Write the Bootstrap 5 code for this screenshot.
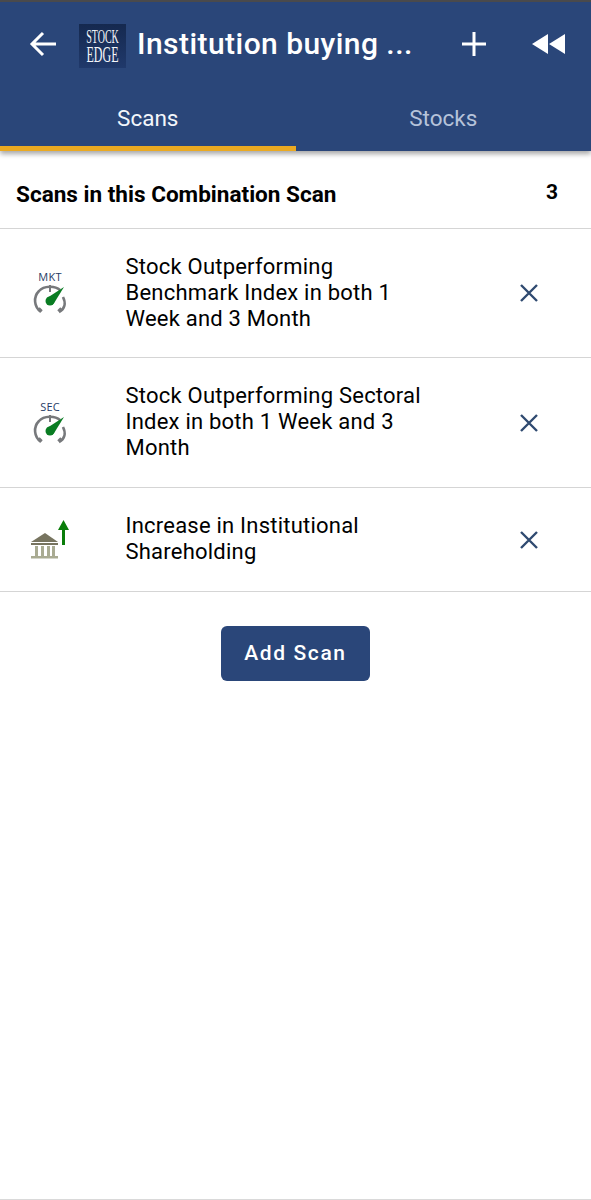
<!DOCTYPE html>
<html lang="en"><head><meta charset="utf-8"><title>Scans</title>
<link href="https://cdn.jsdelivr.net/npm/bootstrap@5.3.0/dist/css/bootstrap.min.css" rel="stylesheet">
<style>
html,body{height:100%}
body{font-family:Roboto,"Liberation Sans",sans-serif;color:#000;background:#fff;overflow:hidden}
.app-head{background:#2a4679;border-top:2px solid #4a4a4c;box-shadow:0 3px 5px rgba(0,0,0,.35);height:151px}
.tool-row{height:84px;padding-left:29px}
.logo-box{width:47px;height:44px;background:linear-gradient(#15294f,#20396b);color:#f4f6fa;font-family:"Liberation Serif",serif;line-height:1;margin-left:22px;margin-top:3px;flex:none}
.logo-a{font-size:10px;transform:scaleY(1.8);line-height:7px;margin-top:9.5px;white-space:nowrap}
.logo-b{font-size:12px;transform:scaleY(1.85);line-height:8px;margin-top:10.5px;white-space:nowrap}
.app-title{font-size:30px;font-weight:500;color:#fff;margin-left:11px;width:300px;letter-spacing:.45px;white-space:nowrap;line-height:36px;flex:none}
.tool-gap-a{margin-left:24px}
.tool-gap-b{margin-left:45px}
.tab-row{height:65px}
.tab-item{flex:1 1 50%;font-size:22.5px;text-align:center;padding-top:16px;color:#b6c3da;border-bottom:5px solid transparent}
.tab-on{color:#f3f6fb;border-bottom-color:#eaa921}
.sum-row{height:78px;padding:0 33px 0 16px;border-bottom:1px solid #d5d5d5;font-size:22.55px;font-weight:700}
.sum-title{margin-top:11px;display:block}
.sum-num{margin-top:7px;font-size:21px}
.scan-row{border-bottom:1px solid #d5d5d5;font-size:22px;line-height:26px;letter-spacing:.22px}
.row-a{height:129px}
.row-b{height:130px}
.row-c{height:104px}
.icon-cell{width:125.5px;flex:none;padding-left:28px}
.text-cell{width:320px;flex:none;padding-bottom:1px}
.close-cell{margin-left:73.5px}
.add-btn,.add-btn:hover{background:#2a4679;color:#fff;border:0;border-radius:6px;width:149px;height:55px;font-size:21px;font-weight:500;letter-spacing:1.6px;padding:0}
.btn-wrap{margin-top:34px}
.bottom-line{position:fixed;left:0;right:0;bottom:0;height:1px;background:#d9d9d9}
svg{display:block}
</style></head>
<body>
<header class="app-head d-flex flex-column">
  <div class="tool-row d-flex align-items-center">
    <svg width="28" height="28" viewBox="0 0 28 28" fill="none" stroke="#fff" stroke-width="3"><path d="M3 14H27M14 3L3 14L14 25"/></svg>
    <div class="logo-box text-center overflow-hidden"><div class="logo-a">STOCK</div><div class="logo-b">EDGE</div></div>
    <div class="app-title">Institution buying ...</div>
    <svg class="tool-gap-a" width="26" height="26" viewBox="0 0 26 26" fill="none" stroke="#fff" stroke-width="3"><path d="M13 1V25M1 13H25"/></svg>
    <svg class="tool-gap-b" width="34" height="22" viewBox="0 0 34 22" fill="#fff"><path d="M0 11L16 1V21ZM17 11L33 1V21Z"/></svg>
  </div>
  <div class="tab-row d-flex">
    <div class="tab-item tab-on">Scans</div>
    <div class="tab-item">Stocks</div>
  </div>
</header>
<main>
  <div class="sum-row d-flex justify-content-between align-items-center"><span class="sum-title">Scans in this Combination Scan</span><span class="sum-num">3</span></div>
  <div class="scan-row row-a d-flex align-items-center">
    <div class="icon-cell"><svg width="46" height="46" viewBox="0 0 46 46"><text x="22" y="11" text-anchor="middle" font-family="'Open Sans',sans-serif" font-size="11" fill="#1f3b66">MKT</text><g fill="none" stroke="#77797c" stroke-width="2.600"><path d="M13 42C6 37 5 27 11 21C16 15.500 27 15.500 32 20M35 27C38 33 37 39 31 42"/><path d="M22 15V22" stroke-width="2"/><path d="M11 38L14 41M33 38L30 41" stroke-width="2"/></g><circle cx="22" cy="31" r="4.500" fill="#0a7d23"/><path d="M19 28L36 17L25.500 34Z" fill="#0a7d23"/></svg></div>
    <div class="text-cell">Stock Outperforming Benchmark Index in both 1 Week and 3 Month</div>
    <div class="close-cell"><svg width="20" height="20" viewBox="0 0 20 20" fill="none" stroke="#2f4a70" stroke-width="2.400"><path d="M2 2L18 18M18 2L2 18"/></svg></div>
  </div>
  <div class="scan-row row-b d-flex align-items-center">
    <div class="icon-cell"><svg width="46" height="46" viewBox="0 0 46 46"><text x="22" y="11" text-anchor="middle" font-family="'Open Sans',sans-serif" font-size="11" fill="#1f3b66">SEC</text><g fill="none" stroke="#77797c" stroke-width="2.600"><path d="M13 42C6 37 5 27 11 21C16 15.500 27 15.500 32 20M35 27C38 33 37 39 31 42"/><path d="M22 15V22" stroke-width="2"/><path d="M11 38L14 41M33 38L30 41" stroke-width="2"/></g><circle cx="22" cy="31" r="4.500" fill="#0a7d23"/><path d="M19 28L36 17L25.500 34Z" fill="#0a7d23"/></svg></div>
    <div class="text-cell">Stock Outperforming Sectoral Index in both 1 Week and 3 Month</div>
    <div class="close-cell"><svg width="20" height="20" viewBox="0 0 20 20" fill="none" stroke="#2f4a70" stroke-width="2.400"><path d="M2 2L18 18M18 2L2 18"/></svg></div>
  </div>
  <div class="scan-row row-c d-flex align-items-center">
    <div class="icon-cell"><svg width="42" height="40" viewBox="0 0 42 40"><path d="M3 22L17 13L30 22Z" fill="#77745f"/><path d="M3 23H30V25H3Z" fill="#77745f"/><path d="M7 26H10V36H7ZM13 26H16V36H13ZM19 26H22V36H19ZM24 26H27V36H24Z" fill="#a9ab92"/><path d="M3 36H30V38.500H3Z" fill="#a9ab92"/><path d="M35.500 0L41 10H37V25H34V10H30Z" fill="#0a7d0a"/></svg></div>
    <div class="text-cell">Increase in Institutional Shareholding</div>
    <div class="close-cell"><svg width="20" height="20" viewBox="0 0 20 20" fill="none" stroke="#2f4a70" stroke-width="2.400"><path d="M2 2L18 18M18 2L2 18"/></svg></div>
  </div>
  <div class="btn-wrap d-flex justify-content-center"><button type="button" class="btn add-btn">Add Scan</button></div>
</main>
<div class="bottom-line"></div>
<script src="https://cdn.jsdelivr.net/npm/bootstrap@5.3.0/dist/js/bootstrap.bundle.min.js"></script>
</body></html>
